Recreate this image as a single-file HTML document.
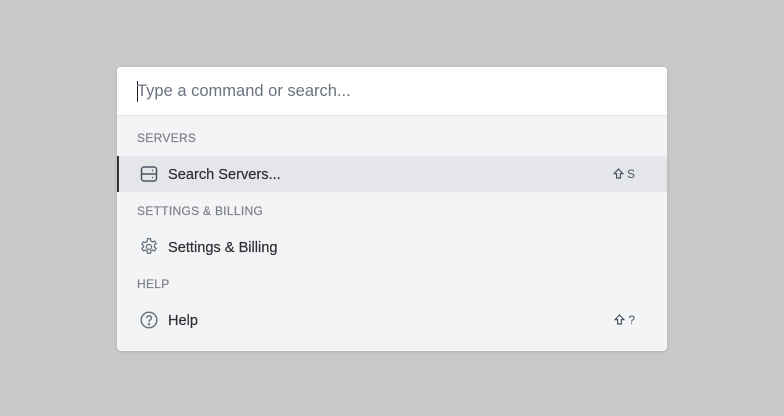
<!DOCTYPE html>
<html><head><style>
body{margin:0;width:784px;height:416px;background:#c8c8c8;font-family:"Liberation Sans",sans-serif;position:relative;overflow:hidden}
.p{position:absolute;left:117px;top:67px;width:550px;height:284px;background:#f3f4f6;border-radius:4px;overflow:hidden;box-shadow:0 1px 3px rgba(0,0,0,.12)}
.in{position:absolute;left:0;top:0;width:550px;height:48px;background:#fff;border-bottom:1px solid #e5e7eb}
.in span{position:absolute;left:20px;top:15px;font-size:16.5px;color:#6b7280}
.cur{position:absolute;left:20px;top:14px;width:1px;height:21px;background:#222}
.h{position:absolute;left:20px;font-size:12px;color:#7c7f86;letter-spacing:.3px;-webkit-text-stroke:.2px #7c7f86}
.it{position:absolute;left:0;width:550px;height:36px;font-size:14.6px;color:#2d2f33}
.it .t{position:absolute;left:51px;top:11px;-webkit-text-stroke:.2px #2d2f33}
.it svg{position:absolute;left:23px;top:9px}
.k{position:absolute;right:32px;top:11px;font-size:12px;color:#4b5563}
.k svg{position:static;vertical-align:-1px;margin-right:3px}
.sel{background:#e5e6e9}
.sel:before{content:"";position:absolute;left:0;top:0;width:2px;height:36px;background:#333}
</style></head><body>
<div class="p">
<div class="in"><div class="cur"></div><span>Type a command or search...</span></div>
<div class="h" style="top:64px">SERVERS</div>
<div class="it sel" style="top:89px">
<svg width="18" height="18" viewBox="0 0 18 18" fill="none" stroke="#4b5563" stroke-width="1.5"><rect x="1.5" y="2" width="15" height="14" rx="2.5"/><line x1="1.5" y1="9" x2="16.5" y2="9"/><line x1="12" y1="5.5" x2="13" y2="5.5"/><line x1="12" y1="12.5" x2="13" y2="12.5"/></svg>
<span class="t">Search Servers...</span><span class="k"><svg width="11" height="11" viewBox="0 0 11 11" fill="none" stroke="#4b5563" stroke-width="1.2"><path d="M5.5 1L1.2 5.6H3.6V10H7.4V5.6H9.8Z"/></svg>S</span></div>
<div class="h" style="top:137px">SETTINGS &amp; BILLING</div>
<div class="it" style="top:162px">
<svg width="18" height="18" viewBox="1.5 1.5 21 21" fill="none" stroke="#6b7280" stroke-width="1.5"><path d="M10.3 2.3h3.4l.5 2.6 1.9 1.1 2.5-.9 1.7 2.9-2 1.7v2.2l2 1.7-1.7 2.9-2.5-.9-1.9 1.1-.5 2.6h-3.4l-.5-2.6-1.9-1.1-2.5.9-1.7-2.9 2-1.7V10.6l-2-1.7 1.7-2.9 2.5.9 1.9-1.1z"/><circle cx="12" cy="12" r="3"/></svg>
<span class="t">Settings &amp; Billing</span></div>
<div class="h" style="top:210px">HELP</div>
<div class="it" style="top:235px">
<svg width="18" height="18" viewBox="0 0 18 18" fill="none" stroke="#6b7280" stroke-width="1.5"><circle cx="9" cy="9" r="7.8"/><path d="M6.8 7a2.3 2.3 0 1 1 3 2.2c-.6.3-.8.7-.8 1.3v.5"/><circle cx="9" cy="13.3" r=".5" fill="#6b7280"/></svg>
<span class="t">Help</span><span class="k"><svg width="11" height="11" viewBox="0 0 11 11" fill="none" stroke="#4b5563" stroke-width="1.2"><path d="M5.5 1L1.2 5.6H3.6V10H7.4V5.6H9.8Z"/></svg>?</span></div>
</div>
</body></html>
